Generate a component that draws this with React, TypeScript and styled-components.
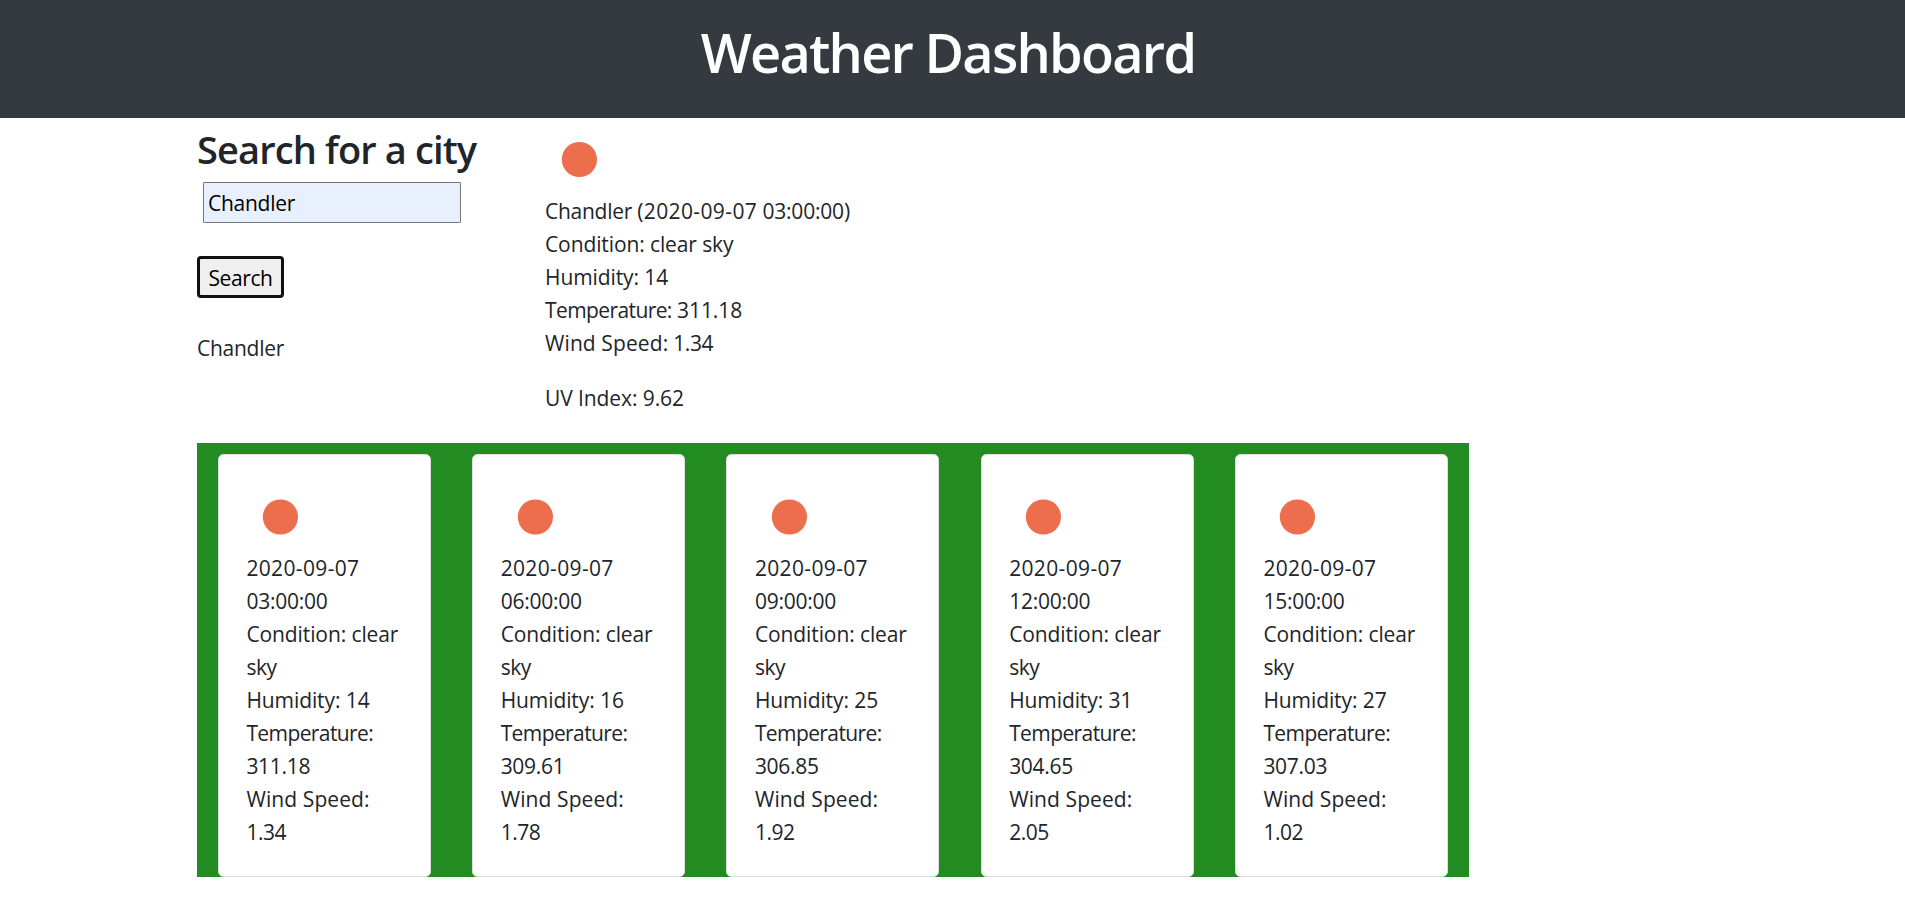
import React from "react";
import styled, { createGlobalStyle } from "styled-components";

const GlobalStyle = createGlobalStyle`
  *, *::before, *::after { box-sizing: border-box; }
  body {
    margin: 0;
    background: #fff;
    color: #212529;
    font-family: "Open Sans", "Noto Sans", sans-serif;
    font-size: 21px;
    line-height: 33px;
    overflow: hidden;
  }
`;

const Header = styled.header`
  height: 118px;
  padding-top: 18px;
  background: #343a40;
  text-align: center;
`;

const Title = styled.h1`
  margin: 0 9px 0 0;
  color: #fff;
  font-size: 54px;
  font-weight: 600;
  line-height: 68px;
  letter-spacing: -1.72px;
`;

const Page = styled.main`
  width: 1272px;
  margin-left: 197px;
`;

const Top = styled.div`
  display: flex;
  height: 325px;
`;

const SearchPanel = styled.section`
  width: 348px;
`;

const Heading = styled.h3`
  margin: 10px 0 12px;
  font-size: 38px;
  font-weight: 600;
  line-height: 42px;
  letter-spacing: -0.87px;
`;

const CityInput = styled.input`
  display: block;
  width: 258px;
  height: 41px;
  margin: 0 0 33px 6px;
  padding: 1px 4px;
  border: 1px solid #767676;
  border-radius: 1px;
  background: #e8f0fe;
  color: #000;
  font: inherit;
  letter-spacing: -0.27px;
`;

const SearchButton = styled.button`
  display: block;
  width: 87px;
  height: 42px;
  margin: 0 0 34px;
  padding: 2px 0 0;
  border: 3px solid #101010;
  border-radius: 4px;
  background: #efefef;
  color: #000;
  font: inherit;
  letter-spacing: -0.38px;
`;

const Current = styled.section`
  padding-top: 7px;
`;

const Icon = styled.svg`
  display: block;
  width: 69px;
  height: 70px;
`;

const Line = styled.div`
  height: 33px;
  white-space: pre;
`;

const UvLine = styled(Line)`
  margin-top: 22px;
`;

const Text = styled.span<{ $spacing: number }>`
  letter-spacing: ${(p) => p.$spacing}px;
`;

const Forecast = styled.section`
  display: grid;
  grid-template-columns: repeat(5, 213px);
  column-gap: 41.25px;
  height: 434px;
  padding: 11px 0 0 20.8px;
  background: #228b22;
`;

const Card = styled.article`
  height: 423px;
  padding: 27px 0 0 27.6px;
  border: 1px solid #dfdfdf;
  border-radius: 5.5px;
  background: #fff;
`;

function Sun({ cy = 34.5 }: { cy?: number }) {
  return (
    <Icon viewBox="0 0 69 70">
      <circle cx="34.4" cy={cy} r="17.6" fill="#ec6e4c" />
    </Icon>
  );
}

const forecast = [
  { time: "03:00:00", humidity: "14", temp: "311.18", wind: "1.34" },
  { time: "06:00:00", humidity: "16", temp: "309.61", wind: "1.78" },
  { time: "09:00:00", humidity: "25", temp: "306.85", wind: "1.92" },
  { time: "12:00:00", humidity: "31", temp: "304.65", wind: "2.05" },
  { time: "15:00:00", humidity: "27", temp: "307.03", wind: "1.02" },
];

export default function App() {
  return (
    <>
      <GlobalStyle />
      <Header>
        <Title>Weather Dashboard</Title>
      </Header>
      <Page>
        <Top>
          <SearchPanel>
            <Heading>Search for a city</Heading>
            <CityInput defaultValue="Chandler" />
            <SearchButton>Search</SearchButton>
            <Line><Text $spacing={-0.27}>Chandler</Text></Line>
          </SearchPanel>
          <Current>
            <Sun />
            <Line>
              <Text $spacing={-0.27}>Chandler </Text>
              <Text $spacing={0.38}>(2020-09-07</Text>
              <Text $spacing={-0.2}> 03:00:00)</Text>
            </Line>
            <Line><Text $spacing={-0.11}>Condition: clear sky</Text></Line>
            <Line><Text $spacing={-0.09}>Humidity: 14</Text></Line>
            <Line>
              <Text $spacing={-0.6}>Temperature:</Text>
              <Text $spacing={-0.1}> 311.18</Text>
            </Line>
            <Line>
              <Text $spacing={0.1}>Wind Speed:</Text>
              <Text $spacing={-0.45}> 1.34</Text>
            </Line>
            <UvLine><Text $spacing={-0.09}>UV Index: 9.62</Text></UvLine>
          </Current>
        </Top>
        <Forecast>
          {forecast.map((f) => (
            <Card key={f.time}>
              <Sun cy={35} />
              <Line><Text $spacing={0.35}>2020-09-07</Text></Line>
              <Line><Text $spacing={-0.25}>{f.time}</Text></Line>
              <Line><Text $spacing={-0.1}>Condition: clear</Text></Line>
              <Line><Text $spacing={-0.5}>sky</Text></Line>
              <Line><Text $spacing={-0.09}>Humidity: {f.humidity}</Text></Line>
              <Line><Text $spacing={-0.6}>Temperature:</Text></Line>
              <Line><Text $spacing={-0.3}>{f.temp}</Text></Line>
              <Line><Text $spacing={0.1}>Wind Speed:</Text></Line>
              <Line><Text $spacing={-0.45}>{f.wind}</Text></Line>
            </Card>
          ))}
        </Forecast>
      </Page>
    </>
  );
}
